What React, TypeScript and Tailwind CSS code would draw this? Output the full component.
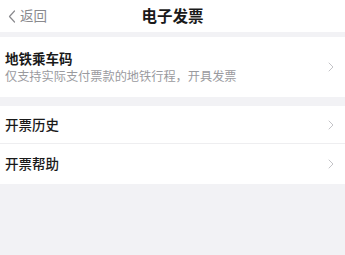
import React from "react";

const Chevron = () => (
  <svg width="6" height="10" viewBox="0 0 6 10" fill="none" className="shrink-0">
    <path d="M1 1l4 4-4 4" stroke="#c4c4c8" strokeWidth="1" strokeLinecap="round" strokeLinejoin="round" />
  </svg>
);

export default function App() {
  return (
    <div
      className="w-[345px] h-[255px] bg-[#f2f2f5] flex flex-col overflow-hidden"
      style={{ fontFamily: '"Noto Sans CJK SC", "Noto Sans", sans-serif' }}
    >
      <div className="h-[32px] bg-white relative flex items-center shrink-0">
        <div className="flex items-center pl-[8px] gap-[4px] text-[#8a8a8e] text-[13.5px]">
          <svg width="8" height="13" viewBox="0 0 8 13" fill="none">
            <path d="M6.5 1L1.5 6.5l5 5.5" stroke="#8a8a8e" strokeWidth="1.2" strokeLinecap="round" strokeLinejoin="round" />
          </svg>
          <span className="leading-none">返回</span>
        </div>
        <div className="absolute left-0 right-0 text-center text-[15.5px] font-bold text-[#1a1a1a] leading-none pointer-events-none">
          电子发票
        </div>
      </div>
      <div className="mt-[5px] h-[60px] bg-white flex items-center pl-[5px] pr-[11px] shrink-0">
        <div className="flex-1 flex flex-col gap-[5px]">
          <div className="text-[13.5px] font-bold text-[#1a1a1a] leading-none">地铁乘车码</div>
          <div className="text-[12.2px] text-[#9a9a9e] leading-none">仅支持实际支付票款的地铁行程，开具发票</div>
        </div>
        <Chevron />
      </div>
      <div className="mt-[9px] bg-white flex flex-col shrink-0">
        <div className="h-[38px] flex items-center pl-[5px] pr-[11px] border-b border-[#eeeef0]">
          <div className="flex-1 text-[13.5px] font-medium text-[#1a1a1a] leading-none">开票历史</div>
          <Chevron />
        </div>
        <div className="h-[40px] flex items-center pl-[5px] pr-[11px]">
          <div className="flex-1 text-[13.5px] font-medium text-[#1a1a1a] leading-none">开票帮助</div>
          <Chevron />
        </div>
      </div>
    </div>
  );
}
